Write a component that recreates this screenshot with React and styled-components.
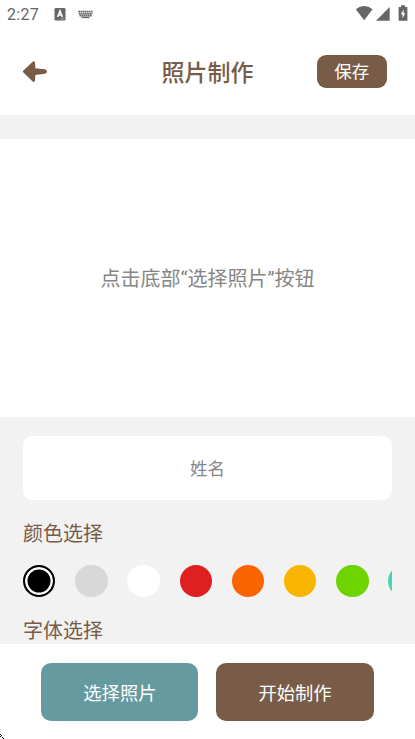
import React from "react";
import styled, { createGlobalStyle } from "styled-components";

const BROWN = "#795c47";

const GlobalStyle = createGlobalStyle`
  * { box-sizing: border-box; }
  body { margin: 0; background: #fff; }
  button, input { font-family: inherit; border: 0; margin: 0; padding: 0; }
`;

const Screen = styled.div`
  display: flex;
  flex-direction: column;
  width: 415px;
  height: 739px;
  overflow: hidden;
  position: relative;
  background: #f2f2f2;
  font-family: Roboto, "Noto Sans CJK SC", sans-serif;
`;

const StatusBar = styled.div`
  display: flex;
  justify-content: space-between;
  height: 28px;
  flex: none;
  padding: 0 7px;
  background: #fff;
  color: #666;
`;

const Clock = styled.span`
  width: 47px;
  font-size: 16px;
  line-height: 29px;
  letter-spacing: 0.3px;
`;

const StatusGroup = styled.div`
  display: flex;
`;

const Header = styled.header`
  display: grid;
  grid-template-columns: 1fr auto 1fr;
  align-items: center;
  height: 87.4px;
  flex: none;
  padding: 0 28px 0 22px;
  background: #fff;
`;

const BackButton = styled.button`
  display: flex;
  width: 28px;
  background: none;
`;

const Title = styled.h1`
  margin: 5px 0 0 6px;
  font-size: 23px;
  font-weight: 500;
  line-height: 30px;
  color: ${BROWN};
`;

const SaveButton = styled.button`
  justify-self: end;
  width: 70.5px;
  height: 32.5px;
  border-radius: 9px;
  background: ${BROWN};
  color: #fff;
  font-size: 17.5px;
  line-height: 32px;
  padding-top: 1px;
`;

const PhotoArea = styled.main`
  display: flex;
  align-items: center;
  justify-content: center;
  height: 278.5px;
  flex: none;
  margin-top: 23.2px;
  background: #fff;
  color: #868686;
  font-size: 20px;
`;

const Options = styled.section`
  display: flex;
  flex-direction: column;
  height: 227px;
  flex: none;
  overflow: hidden;
  padding: 18.5px 23px 0;
`;

const NameInput = styled.input`
  width: 100%;
  height: 64.5px;
  flex: none;
  padding-top: 2px;
  border-radius: 9px;
  background: #fff;
  text-align: center;
  font-size: 17.5px;
  &::placeholder { color: #868686; }
`;

const Label = styled.h2`
  flex: none;
  margin: ${(p) => p.$gap}px 0 0;
  font-size: 20px;
  line-height: 30px;
  font-weight: 400;
  color: ${BROWN};
`;

const Swatches = styled.div`
  display: flex;
  flex: none;
  gap: 19.8px;
  margin-top: 16px;
  overflow: hidden;
`;

const Swatch = styled.button`
  width: 32.4px;
  height: 32.4px;
  flex: none;
  border-radius: 50%;
  background: ${(p) => p.$color};
  ${(p) => p.$selected && "border: 2.5px solid #000; box-shadow: inset 0 0 0 2.5px #fff;"}
`;

const Footer = styled.footer`
  display: flex;
  gap: 18px;
  height: 95px;
  flex: none;
  padding: 19px 0 0 41.3px;
  background: #fff;
`;

const ActionButton = styled.button`
  width: 157.2px;
  height: 57.5px;
  border-radius: 10px;
  background: ${(p) => p.$color};
  color: #fff;
  font-size: 18.3px;
`;

const CornerMark = styled.svg`
  position: absolute;
  left: 0;
  bottom: 0;
`;

const COLORS = ["#000", "#d8d8d8", "#fff", "#e02020", "#fa6400", "#f7b500", "#6dd400", "#44d7b6"];

export default function App() {
  return (
    <Screen>
      <GlobalStyle />
      <StatusBar>
        <StatusGroup>
          <Clock>2:27</Clock>
          <svg width="42" height="28" viewBox="54 0 42 28">
            <rect x="54.5" y="8" width="11" height="12.5" rx="1.3" fill="#666" />
            <path d="M57.6 17L60 10.8 62.4 17M58.5 15h3" fill="none" stroke="#fff" strokeWidth="1.5" />
            <path d="M60.3 18.8h3.8" stroke="#ddd" strokeWidth=".8" strokeDasharray="1 .5" />
            <path d="M78.3 11.6H93M78.8 13.7H92.5M79.5 15.6H92" stroke="#666" strokeWidth="1.6" strokeDasharray="1.7 .4" />
            <path d="M81.5 17.4h8" stroke="#666" strokeWidth="1.4" />
          </svg>
        </StatusGroup>
        <svg width="54" height="28" viewBox="354 0 54 28" fill="#666">
          <path d="M355.8 9.3Q364.2 2.8 372.6 9.3L364.2 20.3Z" />
          <path d="M389.7 7V20.8H376Z" />
          <path d="M399.2 7h1.8V5.2h4V7h1.8q.6 0 .6.6v12.6q0 .6-.6.6h-7.6q-.6 0-.6-.6V7.6q0-.6.6-.6Z" />
          <path d="M403.6 9.4L400.8 14.3H402.5V18.3L405.2 13.2H403.6Z" fill="#fff" />
        </svg>
      </StatusBar>
      <Header>
        <BackButton aria-label="返回">
          <svg width="28" height="24" viewBox="22 60 28 24" fill={BROWN}>
            <path d="M23.4 70.4L32.4 61.9Q34.6 60.2 35 62.7L35.4 68.3L44.8 69.3Q47 69.5 47 71.6T44.8 73.7L35.4 75L35 80.4Q34.6 82.9 32.4 81.2L23.4 72.6Q22.3 71.5 23.4 70.4Z" />
          </svg>
        </BackButton>
        <Title>照片制作</Title>
        <SaveButton>保存</SaveButton>
      </Header>
      <PhotoArea>点击底部“选择照片”按钮</PhotoArea>
      <Options>
        <NameInput placeholder="姓名" aria-label="姓名" />
        <Label $gap={18.5}>颜色选择</Label>
        <Swatches>
          {COLORS.map((color, i) => (
            <Swatch key={color} $color={color} $selected={i === 0} aria-label={color} />
          ))}
        </Swatches>
        <Label $gap={19.2}>字体选择</Label>
      </Options>
      <Footer>
        <ActionButton $color="#659aa0">选择照片</ActionButton>
        <ActionButton $color={BROWN}>开始制作</ActionButton>
      </Footer>
      <CornerMark width="5" height="5" shapeRendering="crispEdges">
        <path d="M0 0h1v1h-1ZM1 1h1v1h-1ZM0 2h1v1h-1ZM2 3h1v1h-1ZM3 4h1v1h-1Z" />
      </CornerMark>
    </Screen>
  );
}
